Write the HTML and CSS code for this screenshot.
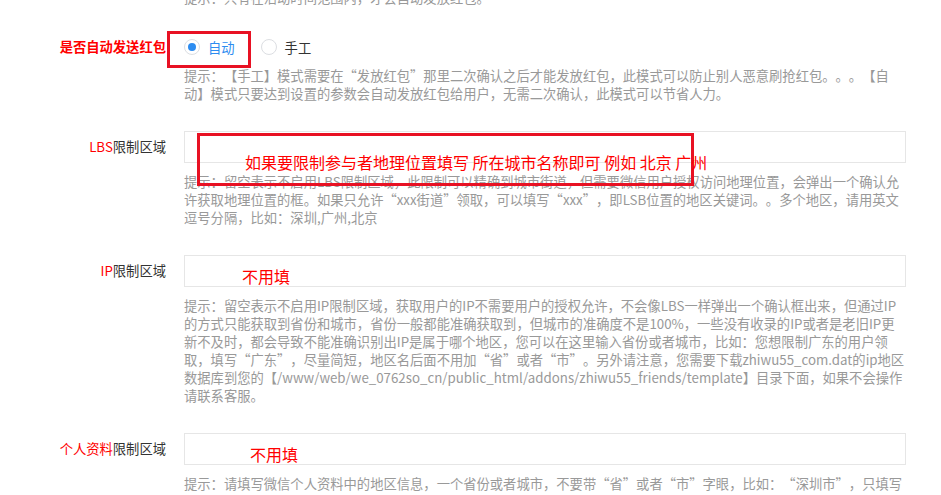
FILE: index.html
```html
<!DOCTYPE html>
<html lang="zh-CN">
<head>
    <meta charset="UTF-8">
    <meta name="viewport" content="width=device-width, initial-scale=1.0">
    <title>红包设置</title>
    <link rel="stylesheet" href="styles.css">
</head>
<body>
    <div class="form">
        <div class="group group-cut">
            <div class="label"></div>
            <div class="field">
                <p class="hint">提示：只有在活动时间范围内，才会自动发放红包。</p>
            </div>
        </div>

        <div class="group">
            <div class="label label-radio"><span class="red bold">是否自动发送红包</span></div>
            <div class="field">
                <div class="radios">
                    <label class="radio checked"><span class="dot"></span>自动</label>
                    <label class="radio"><span class="dot"></span>手工</label>
                </div>
                <p class="hint hint-radio">提示：【手工】模式需要在“发放红包”那里二次确认之后才能发放红包，此模式可以防止别人恶意刷抢红包。。。【自动】模式只要达到设置的参数会自动发放红包给用户，无需二次确认，此模式可以节省人力。</p>
            </div>
            <div class="mark mark-radio"></div>
        </div>

        <div class="group">
            <div class="label"><span class="red">LBS</span>限制区域</div>
            <div class="field">
                <div class="input"></div>
                <p class="hint">提示：留空表示不启用LBS限制区域，此限制可以精确到城市街道，但需要微信用户授权访问地理位置，会弹出一个确认允许获取地理位置的框。如果只允许“xxx街道”领取，可以填写“xxx”，即LSB位置的地区关键词。。多个地区，请用英文逗号分隔，比如：深圳,广州,北京</p>
            </div>
            <div class="mark mark-lbs"></div>
            <div class="note note-lbs">如果要限制参与者地理位置填写 所在城市名称即可 例如 北京 广州</div>
        </div>

        <div class="group">
            <div class="label"><span class="red">IP</span>限制区域</div>
            <div class="field">
                <div class="input"></div>
                <p class="hint">提示：留空表示不启用IP限制区域，获取用户的IP不需要用户的授权允许，不会像LBS一样弹出一个确认框出来，但通过IP的方式只能获取到省份和城市，省份一般都能准确获取到，但城市的准确度不是100%，一些没有收录的IP或者是老旧IP更新不及时，都会导致不能准确识别出IP是属于哪个地区，您可以在这里输入省份或者城市，比如：您想限制广东的用户领取，填写“广东”，尽量简短，地区名后面不用加“省”或者“市”。另外请注意，您需要下载zhiwu55_com.dat的ip地区数据库到您的【/www/web/we_0762so_cn/public_html/addons/zhiwu55_friends/template】目录下面，如果不会操作请联系客服。</p>
            </div>
            <div class="note note-ip">不用填</div>
        </div>

        <div class="group">
            <div class="label"><span class="red">个人资料</span>限制区域</div>
            <div class="field">
                <div class="input"></div>
                <p class="hint">提示：请填写微信个人资料中的地区信息，一个省份或者城市，不要带“省”或者“市”字眼，比如：“深圳市”，只填写“深圳”即可。</p>
            </div>
            <div class="note note-info">不用填</div>
        </div>
    </div>
</body>
</html>
```

FILE: styles.css
```css
body {
    margin: 0;
    background: #fff;
    font-family: "Noto Sans CJK SC", "Microsoft YaHei", sans-serif;
    color: #333;
    overflow: hidden;
    text-spacing-trim: space-all;
}

.form {
    margin-top: -11px;
}

.group {
    position: relative;
    display: grid;
    grid-template-columns: 166px 722px;
    column-gap: 18px;
    margin-bottom: 28px;
}

.label {
    text-align: right;
    font-size: 13.3px;
    line-height: 32px;
    color: #333;
}

.label-radio {
    line-height: 24px;
}

.red {
    color: #f00;
}

.bold {
    font-weight: bold;
}

.input {
    box-sizing: border-box;
    height: 32px;
    border: 1px solid #e6e6e6;
    background: #fff;
}

.hint {
    margin: 10px 0 0;
    font-size: 13.3px;
    line-height: 18px;
    color: #999;
}

.group-cut .hint {
    margin-top: 0;
}

.hint-radio {
    margin-top: 8px;
}

.radios {
    display: flex;
    align-items: center;
    height: 24px;
    font-size: 13.3px;
}

.radio {
    display: flex;
    align-items: center;
    margin-right: 8px;
    color: #333;
}

.radio.checked {
    color: #2d8cf0;
    margin-right: 26px;
}

.dot {
    position: relative;
    box-sizing: border-box;
    width: 16px;
    height: 16px;
    margin-right: 8px;
    border: 1px solid #dcdee2;
    border-radius: 50%;
    background: #fff;
}

.radio.checked .dot::after {
    content: "";
    position: absolute;
    left: 3px;
    top: 3px;
    width: 8px;
    height: 8px;
    border-radius: 50%;
    background: #2d8cf0;
}

/* annotations drawn over the form */
.mark {
    position: absolute;
    box-sizing: border-box;
    border: 3px solid #e81123;
}

.mark-radio {
    left: 167px;
    top: -4px;
    width: 84px;
    height: 37px;
}

.mark-lbs {
    left: 197px;
    top: 2px;
    width: 497px;
    height: 53px;
}

.note {
    position: absolute;
    font-size: 16px;
    line-height: 20px;
    color: #f00;
    white-space: nowrap;
}

.note-lbs {
    left: 245px;
    top: 21px;
}

.note-ip {
    left: 242px;
    top: 11px;
}

.note-info {
    left: 250px;
    top: 11px;
}
```
